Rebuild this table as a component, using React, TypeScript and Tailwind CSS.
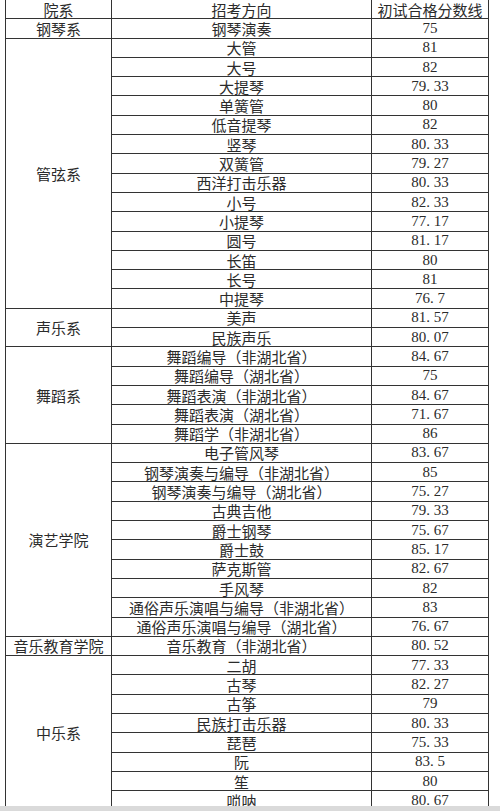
import React from "react";

type Row = [string, string];
type Group = { name: string; rows: Row[] };

const groups: Group[] = [
  { name: "钢琴系", rows: [["钢琴演奏", "75"]] },
  {
    name: "管弦系",
    rows: [
      ["大管", "81"],
      ["大号", "82"],
      ["大提琴", "79.33"],
      ["单簧管", "80"],
      ["低音提琴", "82"],
      ["竖琴", "80.33"],
      ["双簧管", "79.27"],
      ["西洋打击乐器", "80.33"],
      ["小号", "82.33"],
      ["小提琴", "77.17"],
      ["圆号", "81.17"],
      ["长笛", "80"],
      ["长号", "81"],
      ["中提琴", "76.7"],
    ],
  },
  {
    name: "声乐系",
    rows: [
      ["美声", "81.57"],
      ["民族声乐", "80.07"],
    ],
  },
  {
    name: "舞蹈系",
    rows: [
      ["舞蹈编导（非湖北省）", "84.67"],
      ["舞蹈编导（湖北省）", "75"],
      ["舞蹈表演（非湖北省）", "84.67"],
      ["舞蹈表演（湖北省）", "71.67"],
      ["舞蹈学（非湖北省）", "86"],
    ],
  },
  {
    name: "演艺学院",
    rows: [
      ["电子管风琴", "83.67"],
      ["钢琴演奏与编导（非湖北省）", "85"],
      ["钢琴演奏与编导（湖北省）", "75.27"],
      ["古典吉他", "79.33"],
      ["爵士钢琴", "75.67"],
      ["爵士鼓", "85.17"],
      ["萨克斯管", "82.67"],
      ["手风琴", "82"],
      ["通俗声乐演唱与编导（非湖北省）", "83"],
      ["通俗声乐演唱与编导（湖北省）", "76.67"],
    ],
  },
  { name: "音乐教育学院", rows: [["音乐教育（非湖北省）", "80.52"]] },
  {
    name: "中乐系",
    rows: [
      ["二胡", "77.33"],
      ["古琴", "82.27"],
      ["古筝", "79"],
      ["民族打击乐器", "80.33"],
      ["琵琶", "75.33"],
      ["阮", "83.5"],
      ["笙", "80"],
      ["唢呐", "80.67"],
    ],
  },
];

// SimSun-style score: half-width digits, the dot takes a full half-width cell
function Score({ value }: { value: string }) {
  const [whole, frac] = value.split(".");
  return (
    <span className="font-['Liberation_Serif',serif]">
      {whole}
      {frac !== undefined && (
        <>
          <span className="inline-block w-[0.5em] text-left">.</span>
          {frac}
        </>
      )}
    </span>
  );
}

export default function App() {
  return (
    <div className="h-[811px] w-[500px] overflow-hidden bg-white font-['Noto_Sans_CJK_SC',sans-serif] text-[15px] leading-none text-[#2b2b2b]">
      <div className="h-[806px] overflow-hidden">
        <div className="ml-[5px] w-[484px] border-x border-[#333]">
          <div className="flex h-[19.3px] border-b border-[#333]">
            <div className="flex w-[106px] items-center justify-center border-r border-[#333]">院系</div>
            <div className="flex w-[260px] items-center justify-center border-r border-[#333]">招考方向</div>
            <div className="flex flex-1 items-center justify-center">初试合格分数线</div>
          </div>
          {groups.map((g) => (
            <div key={g.name} className="flex border-b border-[#333]">
              <div className="flex w-[106px] items-center justify-center border-r border-[#333]">{g.name}</div>
              <div className="flex-1">
                {g.rows.map(([major, score], i) => (
                  <div
                    key={major}
                    className={
                      i < g.rows.length - 1
                        ? "flex h-[19.3px] border-b border-[#333]"
                        : "flex h-[18.3px]"
                    }
                  >
                    <div className="flex w-[260px] items-center justify-center whitespace-nowrap border-r border-[#333]">
                      {major}
                    </div>
                    <div className="flex flex-1 items-center justify-center">
                      <Score value={score} />
                    </div>
                  </div>
                ))}
              </div>
            </div>
          ))}
        </div>
      </div>
      <div className="h-[5px] bg-[#dadada]" />
    </div>
  );
}
